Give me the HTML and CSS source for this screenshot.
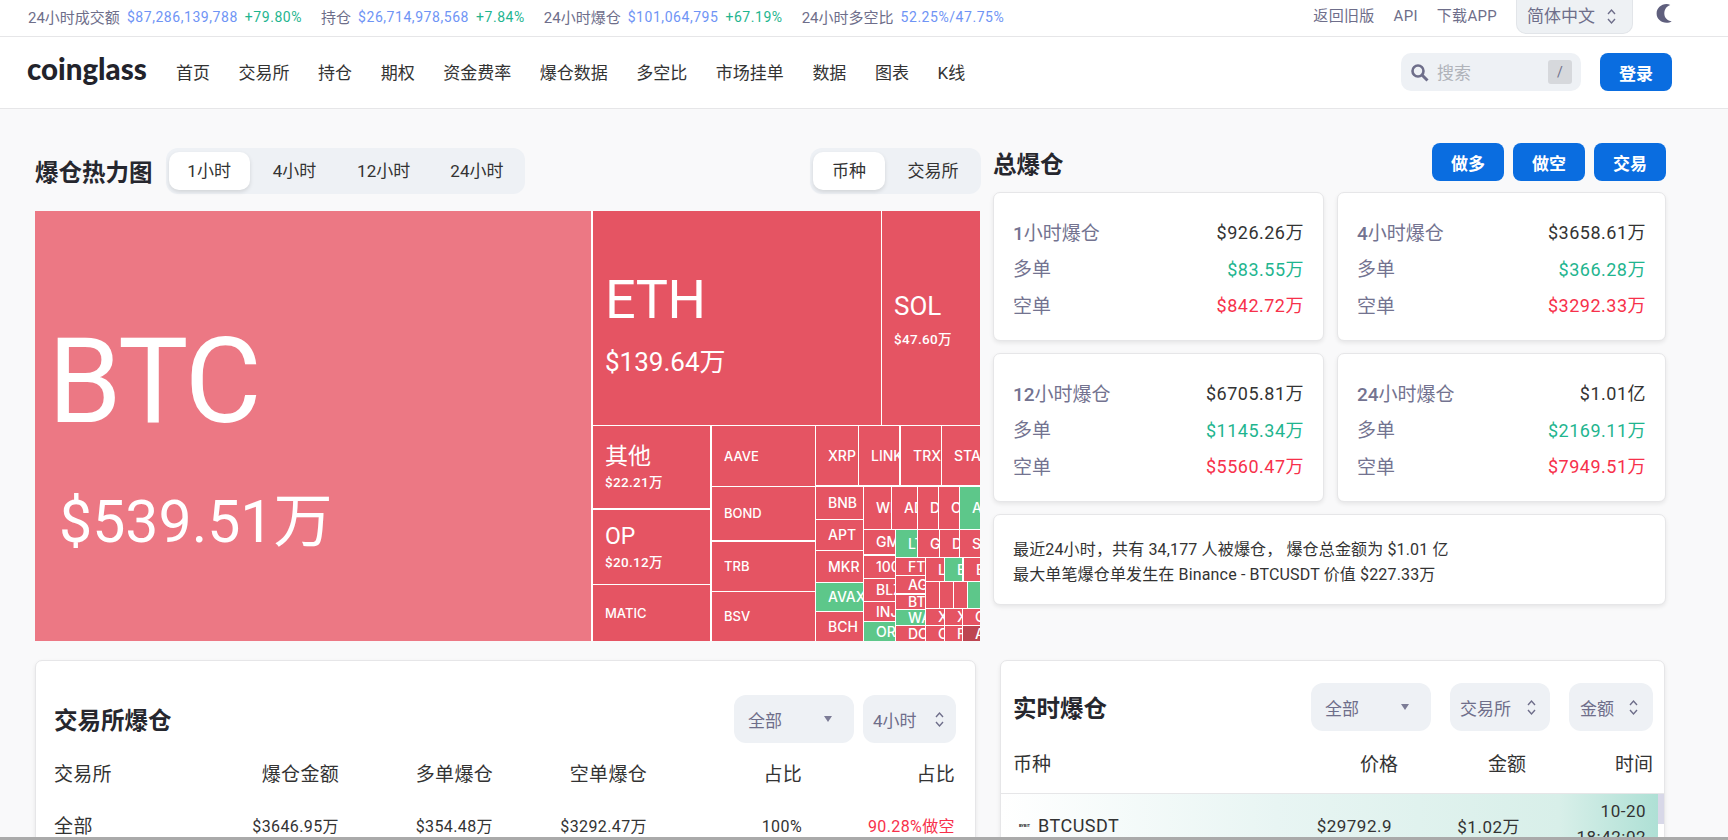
FILE: index.html
```html
<!DOCTYPE html>
<html lang="zh-CN">
<head>
<meta charset="utf-8">
<title>Coinglass 爆仓</title>
<link rel="stylesheet" href="styles.css">
</head>
<body>
<div class="topbar">
  <div class="stats">
    <div class="stat"><span class="muted label">24小时成交额</span><span class="blue">$87,286,139,788</span><span class="up">+79.80%</span></div>
    <div class="stat"><span class="muted label">持仓</span><span class="blue">$26,714,978,568</span><span class="up">+7.84%</span></div>
    <div class="stat"><span class="muted label">24小时爆仓</span><span class="blue">$101,064,795</span><span class="up">+67.19%</span></div>
    <div class="stat"><span class="muted label">24小时多空比</span><span class="blue">52.25%/47.75%</span></div>
  </div>
  <div class="toplinks">
    <a class="muted">返回旧版</a>
    <a class="muted">API</a>
    <a class="muted">下载APP</a>
    <div class="lang">简体中文
      <svg class="chev" width="9" height="17" viewBox="0 0 9 17"><path d="M1 6l3.500-4L8 6M1 11l3.500 4L8 11" fill="none" stroke="#6e6e8a" stroke-width="1.400"/></svg>
    </div>
    <svg class="moon" width="20" height="20" viewBox="0 0 20 20"><path d="M12.500 1C7 1.200 2.600 5.200 2.600 10.500S7 19.600 12.500 19.800c2 0 3.800-.6 5.200-1.600-4.200-.3-7.400-3.600-7.400-7.800s2.600-7.500 6-8.500C15.200 1.300 13.800 1 12.500 1z" fill="#5f5f7d"/></svg>
  </div>
</div>

<header class="nav">
  <div class="logo">coinglass</div>
  <nav class="menu">
    <a>首页</a><a>交易所</a><a>持仓</a><a>期权</a><a>资金费率</a><a>爆仓数据</a><a>多空比</a><a>市场挂单</a><a>数据</a><a>图表</a><a>K线</a>
  </nav>
  <div class="search">
    <svg width="19" height="19" viewBox="0 0 19 19"><circle cx="8" cy="8" r="5.500" fill="none" stroke="#6e6e8a" stroke-width="2.600"/><path d="M12 12l5.500 5.500" stroke="#6e6e8a" stroke-width="3"/></svg>
    <span class="ph">搜索</span>
    <span class="slash">/</span>
  </div>
  <button class="btn login">登录</button>
</header>

<main class="main">
  <section class="top">
    <div class="heat">
      <div class="heat-head">
        <h2 class="title">爆仓热力图</h2>
        <div class="tabs tabs-time">
          <span class="tab active">1小时</span><span class="tab">4小时</span><span class="tab">12小时</span><span class="tab">24小时</span>
        </div>
        <div class="tabs tabs-kind">
          <span class="tab active">币种</span><span class="tab">交易所</span>
        </div>
      </div>
      <div class="treemap">
        <div class="tile light big" style="left:0;top:0;width:556px;height:430px"><div class="n-btc">BTC</div><div class="v-btc">$539.51万</div></div>
        <div class="tile big" style="left:558px;top:0;width:288px;height:214px"><div class="n-eth">ETH</div><div class="v-eth">$139.64万</div></div>
        <div class="tile big" style="left:847px;top:0;width:98px;height:214px"><div class="n-sol">SOL</div><div class="v-sm">$47.60万</div></div>
        <div class="tile big" style="left:558px;top:215px;width:117px;height:82px"><div class="n-mid">其他</div><div class="v-sm">$22.21万</div></div>
        <div class="tile big" style="left:558px;top:299px;width:117px;height:74px"><div class="n-mid">OP</div><div class="v-sm">$20.12万</div></div>
        <div class="tile wide" style="left:558px;top:374px;width:117px;height:56px">MATIC</div>
        <div class="tile wide" style="left:677px;top:215px;width:103px;height:60px">AAVE</div>
        <div class="tile wide" style="left:677px;top:276px;width:103px;height:53px">BOND</div>
        <div class="tile wide" style="left:677px;top:331px;width:103px;height:49px">TRB</div>
        <div class="tile wide" style="left:677px;top:381px;width:103px;height:49px">BSV</div>
        <div class="tile" style="left:781px;top:215px;width:42px;height:59px">XRP</div>
        <div class="tile" style="left:824px;top:215px;width:40px;height:59px">LINK</div>
        <div class="tile" style="left:866px;top:215px;width:40px;height:59px">TRX</div>
        <div class="tile" style="left:907px;top:215px;width:38px;height:59px">STAR</div>
        <div class="tile" style="left:781px;top:276px;width:47px;height:32px">BNB</div>
        <div class="tile" style="left:781px;top:309px;width:47px;height:30px">APT</div>
        <div class="tile" style="left:781px;top:340px;width:47px;height:31px">MKR</div>
        <div class="tile green" style="left:781px;top:372px;width:47px;height:28px">AVAX</div>
        <div class="tile" style="left:781px;top:401px;width:47px;height:29px">BCH</div>
        <div class="tile" style="left:829px;top:276px;width:27px;height:42px">WLD</div>
        <div class="tile" style="left:857px;top:276px;width:25px;height:42px">ADA</div>
        <div class="tile" style="left:883px;top:276px;width:20px;height:42px">DOT</div>
        <div class="tile" style="left:904px;top:276px;width:20px;height:42px">OP</div>
        <div class="tile green" style="left:925px;top:276px;width:20px;height:42px">ARB</div>
        <div class="tile" style="left:829px;top:319px;width:31px;height:24px">GMT</div>
        <div class="tile" style="left:829px;top:345px;width:31px;height:22px">100</div>
        <div class="tile" style="left:829px;top:368px;width:31px;height:22px">BLZ</div>
        <div class="tile" style="left:829px;top:391px;width:31px;height:19px">INJ</div>
        <div class="tile green" style="left:829px;top:411px;width:31px;height:19px">ORDI</div>
        <div class="tile green" style="left:861px;top:319px;width:21px;height:27px">LTC</div>
        <div class="tile" style="left:883px;top:319px;width:21px;height:27px">GAS</div>
        <div class="tile" style="left:905px;top:319px;width:19px;height:27px">DYD</div>
        <div class="tile" style="left:925px;top:319px;width:20px;height:27px">SUI</div>
        <div class="tile" style="left:861px;top:347px;width:29px;height:17px">FTM</div>
        <div class="tile" style="left:861px;top:365px;width:29px;height:17px">AGI</div>
        <div class="tile" style="left:861px;top:384px;width:29px;height:14px">BTT</div>
        <div class="tile green" style="left:861px;top:399px;width:29px;height:15px">WAV</div>
        <div class="tile" style="left:861px;top:415px;width:29px;height:15px">DOG</div>
        <div class="tile" style="left:891px;top:347px;width:18px;height:23px">LDO</div>
        <div class="tile green" style="left:910px;top:347px;width:17px;height:23px">ETC</div>
        <div class="tile" style="left:929px;top:347px;width:16px;height:23px">EOS</div>
        <div class="tile" style="left:891px;top:371px;width:13px;height:26px"></div>
        <div class="tile" style="left:905px;top:371px;width:13px;height:26px"></div>
        <div class="tile" style="left:919px;top:371px;width:13px;height:26px"></div>
        <div class="tile green" style="left:933px;top:371px;width:12px;height:26px"></div>
        <div class="tile" style="left:891px;top:398px;width:18px;height:16px">XLM</div>
        <div class="tile" style="left:910px;top:398px;width:17px;height:16px">XMR</div>
        <div class="tile" style="left:928px;top:398px;width:17px;height:16px">OKB</div>
        <div class="tile" style="left:891px;top:415px;width:18px;height:15px">CRV</div>
        <div class="tile" style="left:910px;top:415px;width:17px;height:15px">FIL</div>
        <div class="tile dark" style="left:928px;top:415px;width:17px;height:15px">APE</div>
      </div>
    </div>

    <div class="total">
      <div class="total-head">
        <h2 class="title">总爆仓</h2>
        <div class="actions">
          <button class="btn">做多</button><button class="btn">做空</button><button class="btn">交易</button>
        </div>
      </div>
      <div class="cards">
        <div class="card stat-card">
          <div class="row"><span class="lbl"><b>1</b>小时爆仓</span><span class="val">$926.26万</span></div>
          <div class="row"><span class="lbl">多单</span><span class="val long">$83.55万</span></div>
          <div class="row"><span class="lbl">空单</span><span class="val short">$842.72万</span></div>
        </div>
        <div class="card stat-card">
          <div class="row"><span class="lbl"><b>4</b>小时爆仓</span><span class="val">$3658.61万</span></div>
          <div class="row"><span class="lbl">多单</span><span class="val long">$366.28万</span></div>
          <div class="row"><span class="lbl">空单</span><span class="val short">$3292.33万</span></div>
        </div>
        <div class="card stat-card">
          <div class="row"><span class="lbl"><b>12</b>小时爆仓</span><span class="val">$6705.81万</span></div>
          <div class="row"><span class="lbl">多单</span><span class="val long">$1145.34万</span></div>
          <div class="row"><span class="lbl">空单</span><span class="val short">$5560.47万</span></div>
        </div>
        <div class="card stat-card">
          <div class="row"><span class="lbl"><b>24</b>小时爆仓</span><span class="val">$1.01亿</span></div>
          <div class="row"><span class="lbl">多单</span><span class="val long">$2169.11万</span></div>
          <div class="row"><span class="lbl">空单</span><span class="val short">$7949.51万</span></div>
        </div>
      </div>
      <div class="card note">
        <p>最近24小时，共有 34,177 人被爆仓， 爆仓总金额为 $1.01 亿</p>
        <p>最大单笔爆仓单发生在 Binance - BTCUSDT 价值 $227.33万</p>
      </div>
    </div>
  </section>

  <section class="bottom">
    <div class="card ex">
      <div class="ex-head">
        <h2 class="title">交易所爆仓</h2>
        <div class="selects">
          <div class="select s-all">全部<span class="caret"></span></div>
          <div class="select s-time">4小时
            <svg width="9" height="17" viewBox="0 0 9 17"><path d="M1 6l3.500-4L8 6M1 11l3.500 4L8 11" fill="none" stroke="#6e6e8a" stroke-width="1.400"/></svg>
          </div>
        </div>
      </div>
      <div class="ex-table">
        <div class="ex-row ex-th"><span>交易所</span><span>爆仓金额</span><span>多单爆仓</span><span>空单爆仓</span><span>占比</span><span>占比</span></div>
        <div class="ex-row ex-td"><span class="first">全部</span><span>$3646.95万</span><span>$354.48万</span><span>$3292.47万</span><span>100%</span><span class="short">90.28%做空</span></div>
      </div>
    </div>

    <div class="card live">
      <div class="live-head">
        <h2 class="title">实时爆仓</h2>
        <div class="selects live-selects">
          <div class="select s-live-all">全部<span class="caret"></span></div>
          <div class="select s-live-ex">交易所
            <svg width="9" height="17" viewBox="0 0 9 17"><path d="M1 6l3.500-4L8 6M1 11l3.500 4L8 11" fill="none" stroke="#6e6e8a" stroke-width="1.400"/></svg>
          </div>
          <div class="select s-live-amt">金额
            <svg width="9" height="17" viewBox="0 0 9 17"><path d="M1 6l3.500-4L8 6M1 11l3.500 4L8 11" fill="none" stroke="#6e6e8a" stroke-width="1.400"/></svg>
          </div>
        </div>
      </div>
      <div class="live-th"><span>币种</span><span>价格</span><span>金额</span><span>时间</span></div>
      <div class="live-list">
        <div class="live-rows">
          <div class="live-row">
            <span class="coin"><span class="bybit">BYBIT</span>BTCUSDT</span>
            <span class="num">$29792.9</span>
            <span class="num">$1.02万</span>
            <span class="time">10-20<br>18:42:02</span>
          </div>
        </div>
        <div class="scrollbar"></div>
      </div>
    </div>
  </section>
</main>
<div class="window-edge"></div>
</body>
</html>
```

FILE: styles.css
```css
* { box-sizing: border-box; }
html, body { margin: 0; padding: 0; height: 840px; overflow: hidden; }
body {
  background: #f9f9fa;
  color: #333;
  font-family: Roboto, "Noto Sans CJK SC", sans-serif;
  letter-spacing: .5px;
}
h2, p { margin: 0; }

.muted { color: #6e6e8a; }
.blue { color: #6f94f5; }
.up { color: #1fb58f; }
.long { color: #1fb58f; }
.short { color: #f7314b; }

.topbar {
  height: 37px;
  background: #fff;
  border-bottom: 1px solid #e6e6e8;
  display: flex;
  justify-content: space-between;
  padding: 0 54px 0 28px;
  font-size: 14px;
}
.stats { display: flex; gap: 19px; height: 33px; align-items: center; }
.stat { display: flex; gap: 7px; align-items: center; letter-spacing: .55px; }
.label { font-size: 15px; letter-spacing: 0; }
.toplinks { display: flex; align-items: flex-start; gap: 19px; line-height: 33px; letter-spacing: .3px; font-size: 15px; }
.lang {
  width: 117px;
  height: 34px;
  background: #eef1f4;
  border: 1px solid #e2e5e9;
  border-top: 0;
  border-radius: 0 0 10px 10px;
  color: #6e6e8a;
  font-size: 17px;
  padding-left: 10px;
  display: flex;
  align-items: center;
  gap: 12px;
  letter-spacing: 0;
}
.moon { margin: 3px 0 0 2px; }

.nav {
  height: 72px;
  background: #fff;
  border-bottom: 1px solid #e6e6e8;
  display: flex;
  align-items: center;
  padding: 0 56px 1px 27px;
}
.logo {
  font-family: Lato, sans-serif;
  font-weight: 900;
  font-size: 29.5px;
  letter-spacing: 0;
  color: #22232b;
  width: 149px;
  line-height: 1;
  margin-top: -6px;
}
.menu { display: flex; gap: 28.55px; font-size: 17px; letter-spacing: 0; color: #333; flex: 1; margin-top: -2px; }
.search {
  width: 180px;
  height: 38px;
  background: #eef1f5;
  border-radius: 10px;
  display: flex;
  align-items: center;
  padding: 0 9px;
  font-size: 17px;
  letter-spacing: 0;
  margin-right: 19px;
}
.ph { color: #b0b3ba; margin: -2px 0 0 8px; flex: 1; }
.slash {
  width: 24px;
  height: 24px;
  background: #d6d8dc;
  border-radius: 3px;
  text-align: center;
  font-size: 14px;
  line-height: 24px;
  color: #6e6e8a;
}
.btn {
  width: 72px;
  height: 38px;
  background: #0a6de0;
  color: #fff;
  border: 0;
  border-radius: 8px;
  font: bold 17px Roboto, "Noto Sans CJK SC", sans-serif;
  padding: 0;
}

.main { padding: 34px 62px 0 35px; }
.title { font-size: 23.5px; font-weight: 700; color: #26272e; letter-spacing: 0; }

.top { display: grid; grid-template-columns: 945px 673px; column-gap: 13px; }
.heat { padding-top: 5px; }
.heat-head { display: flex; align-items: center; height: 46px; margin-bottom: 17px; }
.tabs {
  height: 46px;
  background: #eef1f5;
  border-radius: 12px;
  display: flex;
  align-items: center;
  padding: 0 3px;
  font-size: 17px;
  letter-spacing: 0;
  color: #333;
}
.tabs-time { margin-left: 13px; width: 359px; }
.tabs-kind { margin-left: auto; width: 171px; margin-right: -1px; }
.tab { height: 38px; line-height: 38px; text-align: center; border-radius: 10px; }
.tabs-time .tab { width: 82px; margin-right: 4px; }
.tabs-time .tab:nth-child(3) { width: 90px; }
.tabs-time .tab:nth-child(4) { width: 90px; margin-right: 0; }
.tabs-kind .tab { width: 72px; margin-right: 6px; }
.tabs-kind .tab:last-child { width: 84px; margin-right: 0; }
.tab.active { background: #fff; box-shadow: 0 2px 4px rgba(0, 0, 0, .12); }

.treemap { position: relative; width: 945px; height: 430px; background: #fff; overflow: hidden; }
.tile {
  position: absolute;
  background: #e55463;
  color: #fff;
  overflow: hidden;
  white-space: nowrap;
  display: flex;
  flex-direction: column;
  justify-content: center;
  padding-left: 12px;
  font-family: Inter, "Noto Sans CJK SC", sans-serif;
  font-size: 14px;
  font-weight: 500;
  letter-spacing: 0;
  line-height: 1;
}
.tile.light { background: #ec7884; }
.tile.green { background: #5dc78a; }
.tile.dark { background: #bd4551; }
.tile.wide { font-size: 13px; }
.tile.big { font-family: Roboto, "Noto Sans CJK SC", sans-serif; }
.n-btc { font-size: 118px; font-weight: 400; margin: 22px 0 51px 1px; letter-spacing: -2px; }
.v-btc { font-size: 59px; font-weight: 400; margin-left: 12px; }
.n-eth { font-size: 54px; font-weight: 400; margin: 11px 0 22px; letter-spacing: -.5px; }
.v-eth { font-size: 26px; font-weight: 400; }
.n-sol { font-size: 26px; font-weight: 400; margin: 3px 0 14px; }
.v-sm { font-size: 13.5px; font-weight: 500; letter-spacing: .3px; }
.n-mid { font-size: 23px; font-weight: 400; margin-bottom: 8px; }

.total-head { display: flex; justify-content: space-between; align-items: center; height: 38px; margin-bottom: 11px; }
.total-head .title { margin-top: 2px; }
.actions { display: flex; gap: 9px; }
.cards { display: grid; grid-template-columns: 331px 329px; gap: 12px 13px; }
.card {
  background: #fff;
  border: 1px solid #e6e6e8;
  border-radius: 7px;
  box-shadow: 0 2px 4px rgba(0, 0, 0, .08);
}
.stat-card {
  height: 149px;
  padding: 20px 19px 0;
  font-size: 18px;
}
.row { display: flex; justify-content: space-between; align-items: center; height: 36.5px; }
.lbl { color: #737390; font-size: 19px; letter-spacing: 0; }
.lbl b { font-weight: 500; }
.note {
  margin-top: 12px;
  height: 91px;
  padding: 22px 19px 0;
  font-size: 16px;
  line-height: 25px;
  letter-spacing: .15px;
  color: #333;
}

.bottom { display: grid; grid-template-columns: 941px 665px; column-gap: 24px; margin-top: 19px; }
.ex { padding: 34px 19px 0 18px; height: 300px; }
.ex-head { display: flex; justify-content: space-between; align-items: center; height: 48px; }
.selects { display: flex; gap: 9px; }
.select {
  height: 48px;
  background: #eef1f5;
  border-radius: 12px;
  display: flex;
  align-items: center;
  justify-content: space-between;
  padding: 0 14px;
  font-size: 17px;
  letter-spacing: 0;
  color: #6e6e8a;
}
.caret { width: 0; height: 0; border: 4.500px solid transparent; border-top: 6px solid #7c7c96; border-bottom: 0; margin-right: 8px; }
.s-all { width: 120px; }
.s-time { width: 93px; padding: 0 12px 0 10px; }
.ex-row { display: grid; grid-template-columns: 147px 138px 154px 154px 155px 153px; letter-spacing: 0; }
.ex-row span { text-align: right; }
.ex-row span:first-child { text-align: left; }
.ex-th { font-size: 19px; letter-spacing: .3px; margin-top: 18px; height: 28px; line-height: 28px; }
.ex-td { font-size: 16px; letter-spacing: .4px; margin-top: 24px; line-height: 28px; }
.ex-td .first { font-size: 19px; }

.live { padding: 0; height: 300px; }
.live-head { display: flex; justify-content: space-between; align-items: center; height: 48px; margin: 22px 11px 0 12px; }
.live-selects { gap: 19px; }
.s-live-all { width: 120px; }
.s-live-ex { width: 100px; padding: 0 14px 0 10px; }
.s-live-amt { width: 84px; padding: 0 15px 0 11px; }
.live-th {
  display: grid;
  grid-template-columns: 1fr 128px 128px 127px;
  margin: 0 11px 0 12px;
  font-size: 19px;
  letter-spacing: 0;
  height: 62px;
  padding-top: 20px;
  line-height: 28px;
}
.live-th span { text-align: right; }
.live-th span:first-child { text-align: left; }
.live-list { display: flex; border-top: 1px solid #e6e6e8; }
.live-rows { flex: 1; }
.live-row {
  display: grid;
  grid-template-columns: 1fr 125px 128px 126px;
  align-items: center;
  height: 60px;
  padding: 0 12px 0 13px;
  font-size: 17px;
  letter-spacing: .5px;
  background: linear-gradient(90deg, #fff 0, #e8f5f3 42%, #d8efe9 85%, #aee0d5 100%);
}
.live-row span { text-align: right; }
.live-row .num { padding-top: 3px; }
.live-row .coin { text-align: left; display: flex; align-items: center; font-size: 18px; padding-top: 3px; }
.bybit { width: 16px; font-size: 4px; font-weight: 700; color: #222; margin-right: 8px; text-align: left; letter-spacing: 0; }
.time { line-height: 26px; font-size: 17px; }
.scrollbar { width: 6px; height: 30px; background: #d8d8e8; }

.window-edge { position: fixed; left: 0; right: 0; bottom: 0; height: 3px; background: #aaa; }
```
